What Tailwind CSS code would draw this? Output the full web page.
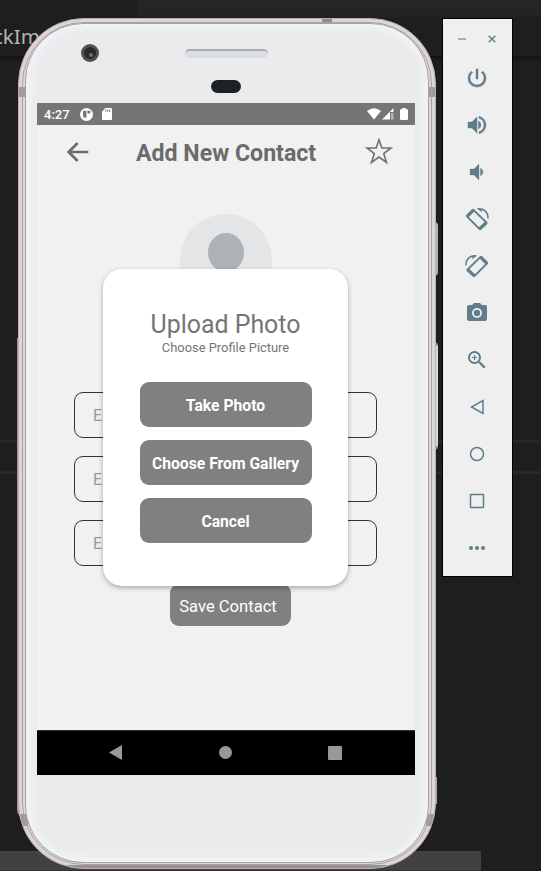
<!DOCTYPE html>
<html lang="en">
<head>
<meta charset="utf-8">
<title>Add New Contact</title>
<script src="https://cdn.jsdelivr.net/npm/@tailwindcss/browser@4"></script>
</head>
<body class="relative h-[871px] w-[541px] overflow-hidden bg-[#1e1e1e] font-[Roboto,sans-serif]">
<!-- Editor window behind the emulator -->
<div class="absolute inset-0 flex flex-col">
  <div class="flex h-[17px] bg-[#1f1f1f]"><div class="ml-[137px] grow bg-[#252525]"></div></div>
  <div class="flex h-[39px] items-center bg-[#1e1e1e] shadow-[0_2px_4px_#111]"><span class="-ml-[7px] font-['Noto_Sans',sans-serif] text-[20.5px] text-[#b4b4b4]">ckIm</span></div>
  <div class="mt-[384px] h-[34px] border-y-3 border-[#282828]"></div>
  <div class="mt-auto h-5 w-[481px] border-b border-[#382e30] bg-[#414141]"></div>
</div>

<!-- Side buttons -->
<div class="absolute left-[434px] top-[222px] h-[54px] w-1 rounded-r-sm bg-[#b3b6b7]"></div>
<div class="absolute left-[434px] top-[342px] h-[108px] w-1 rounded-r-sm border-y-4 border-[#969494] bg-[#d8dad9]"></div>
<div class="absolute left-[434px] top-[777px] h-[27px] w-[3px] bg-[#aaa5a7]"></div>
<div class="absolute left-[17px] top-[338px] h-[480px] w-2 rounded-bl-[8px] bg-[#9f999b]"></div>

<!-- Phone -->
<div class="absolute left-[18px] top-[18px] h-[851px] w-[418px] overflow-hidden rounded-[66px] border border-[#b7afb2] bg-[#ded5d9]">
  <div class="absolute -left-px top-[68px] h-2.5 w-2 bg-[#a19a9d]"></div>
  <div class="absolute -right-px top-[68px] h-2.5 w-2 bg-[#a19a9d]"></div>
  <div class="absolute -left-px top-[795px] h-3 w-2.5 bg-[#a19a9d]"></div>
  <div class="absolute -right-px top-[795px] h-3 w-2.5 bg-[#a19a9d]"></div>
  <div class="absolute left-[303px] top-0 h-1.5 w-2.5 bg-[#8f898c]"></div>
  <div class="absolute inset-x-0 bottom-0 h-[3px] bg-[#989194]"></div>
  <div class="absolute inset-[3px] rounded-[62px] border border-[#aaa2a5]"></div>
  <div class="absolute inset-x-[6px] bottom-[5px] top-[4px] flex flex-col rounded-[58px] border border-[#a5a1a4] bg-[#e9ebed] pl-[11px] pr-[13px] shadow-[inset_0_0_8px_4px_#f3f4f7]">
    <div class="relative h-[79px] shrink-0">
      <div class="absolute left-[44px] top-[20px] size-[18px] rounded-full bg-[#4e5052] p-[3px]"><div class="flex size-3 items-center justify-center rounded-full bg-[#282a2e]"><div class="ml-0.5 mt-1 size-1 rounded-full bg-[#77704c]"></div></div></div>
      <div class="absolute left-[148px] top-[25px] h-[9px] w-[83px] rounded-full border-t-2 border-[#a7abb8] bg-[#dcdde0]"></div>
      <div class="absolute left-[174px] top-[56px] h-[13px] w-[30px] rounded-full bg-[#1e2227]"></div>
    </div>
    <!-- Screen -->
    <div class="relative flex h-[672px] w-[378px] shrink-0 flex-col bg-[#f1f1f1]">
      <header class="flex h-[22px] items-center bg-[#757575] pl-[7px] pr-[7px] text-white">
        <span class="pt-px text-[13px] font-medium leading-[21px]">4:27</span>
        <svg class="ml-[10px] size-[13px]" viewBox="0 0 13 13"><circle cx="6.5" cy="6.5" r="6.5" fill="#fff"/><path d="M3 2.7h3.5v7H5a2 2 0 0 1-2-2zM7.5 2.8h2.8v2.7H7.5z" fill="#757575"/></svg>
        <svg class="ml-[9px] h-3 w-[10px]" viewBox="0 0 10 12"><path d="M3.5 0H9q1 0 1 1v10q0 1-1 1H1q-1 0-1-1V3.5z" fill="#fff"/><path d="M3.8 1.5v2.4M5.8 1.5v2.4M7.8 1.5v2.4" stroke="#757575"/></svg>
        <svg class="ml-auto h-3 w-[14px]" viewBox="0 0 14 12"><path d="M0 3Q7-2.5 14 3L7 11.5z" fill="#fff"/></svg>
        <svg class="ml-[1px] h-3 w-3" viewBox="0 0 12 12"><path d="M0 11.5L11.5 0v4H8v7.5z" fill="#fff"/><path d="M9 5h2.5v6.5H9z" fill="#b8b8b8"/></svg>
        <svg class="ml-[6px] h-3 w-2" viewBox="0 0 8 12"><path d="M2.2 0h3.6v1.2H7q1 0 1 1V11q0 1-1 1H1q-1 0-1-1V2.2q0-1 1-1h1.2z" fill="#fff"/></svg>
      </header>
      <main class="flex grow flex-col items-center">
        <div class="flex h-[54px] w-full items-center pl-[30px] pr-[22px]">
          <svg class="-mt-px h-[20px] w-[22px]" viewBox="0 0 22 20" fill="none" stroke="#6c6c6c" stroke-width="2.6"><path d="M21.3 10H1.8M10.700 1L1.700 10l9 9"/></svg>
          <h1 class="ml-[47px] mt-[3px] whitespace-nowrap text-[23.15px] font-bold leading-7 text-[#6b6b6b]">Add New Contact</h1>
          <svg class="-mt-0.5 ml-auto size-7" viewBox="0 0 28 28" fill="none" stroke="#707070" stroke-width="1.6"><path d="M14 2.800l2.800 8.200h9.200l-7.300 5.500 2.800 9-7.500-5.500-7.500 5.500 2.800-9L2 11h9.200z"/></svg>
        </div>
        <div class="mt-[35px] h-[92px] w-[92px] rounded-full bg-[#e3e5e6] pt-[19px]"><div class="mx-auto h-[39px] w-9 rounded-[50%] bg-[#adb3b7]"></div></div>
        <div class="mr-px mt-[86px] flex w-[303px] flex-col gap-[18px] text-[16px] text-[#999]">
          <div class="flex h-[46px] items-center rounded-[9px] border border-[#333] pl-[18px] pt-0.5">Enter Name</div>
          <div class="flex h-[46px] items-center rounded-[9px] border border-[#333] pl-[18px] pt-0.5">Enter Phone</div>
          <div class="flex h-[46px] items-center rounded-[9px] border border-[#333] pl-[18px] pt-0.5">Enter Email</div>
        </div>
        <button class="ml-[9px] mt-[18px] h-[42px] w-[121px] rounded-[9px] bg-[#808080] pr-[5px] pt-1 text-[16.6px] text-white">Save Contact</button>
      </main>
      <nav class="flex h-[45px] items-center border-t border-[#303637] bg-black pb-px pl-[72px]">
        <svg class="h-[15px] w-[13px]" viewBox="0 0 13 15"><path d="M13 0v15L0 7.500z" fill="#999"/></svg>
        <div class="ml-[97px] size-[13px] rounded-full bg-[#999]"></div>
        <div class="ml-[96px] size-[14px] rounded-[1px] bg-[#999]"></div>
      </nav>
      <section class="absolute left-[66px] top-[166px] flex h-[317px] w-[245px] flex-col items-center rounded-[19px] bg-white pt-[41px] text-[#757575] shadow-[0_2px_5px_rgba(0,0,0,0.3)]">
        <h2 class="text-[24.9px] leading-[30px]">Upload Photo</h2>
        <p class="-mt-px text-[12.9px] leading-[17px]">Choose Profile Picture</p>
        <div class="mt-[26px] flex w-[172px] flex-col gap-[13px] text-[15.7px] font-bold text-white">
          <button class="h-[45px] rounded-[9px] bg-[#808080] pt-0.5">Take Photo</button>
          <button class="h-[45px] whitespace-nowrap rounded-[9px] bg-[#808080] pt-0.5">Choose From Gallery</button>
          <button class="h-[45px] rounded-[9px] bg-[#808080] pt-0.5">Cancel</button>
        </div>
      </section>
    </div>
  </div>
</div>

<!-- Emulator toolbar -->
<aside class="absolute left-[442px] top-[18px] flex h-[559px] w-[71px] flex-col items-center border border-black bg-[#efefef] text-[#607d8b]">
  <div class="flex h-[35px] w-full items-center pl-[15px] pt-[5px]">
    <div class="h-[2px] w-2 bg-[#9eb0b8]"></div>
    <svg class="ml-[22px] size-2" viewBox="0 0 8 8" stroke="currentColor" stroke-width="1.4"><path d="M.7.7l6.600 6.600M7.300.7L.7 7.300"/></svg>
  </div>
  <div class="flex flex-col gap-[23px] pr-[2px] pt-[12px]">
    <svg class="size-6" viewBox="0 0 24 24" fill="currentColor"><path d="M13 3h-2v10h2V3zm4.800 2.200l-1.400 1.400A7 7 0 1 1 7.600 6.600L6.200 5.200a9 9 0 1 0 11.600 0z" stroke="currentColor" stroke-width=".5"/></svg>
    <svg class="size-6" viewBox="0 0 24 24" fill="currentColor"><path d="M3 9v6h4l5 5V4L7 9zM13.500 7.970v8.050a4.500 4.500 0 0 0 0-8.050zM14 3.230v2.060a7 7 0 0 1 0 13.420v2.060a9 9 0 0 0 0-17.540z" stroke="currentColor" stroke-width=".5"/></svg>
    <svg class="size-6" viewBox="0 0 24 24" fill="currentColor"><path d="M5 9v6h4l5 5V4L9 9zM15.500 7.970v8.050a4.500 4.500 0 0 0 0-8.050z" stroke="currentColor" stroke-width=".3"/></svg>
    <svg class="size-6" viewBox="0 0 24 24" fill="none" stroke="currentColor"><path d="M8.500 3L21.500 15.500 14.500 22 2 9.500z" stroke-width="1.800"/><path d="M2 9.500L8.500 3M21.500 15.500L14.500 22" stroke-width="3.200"/><path d="M12.500 1.800C18.500.8 23.300 5 23 11.500M13 1.500l4 3" stroke-width="1.500"/></svg>
    <svg class="size-6" viewBox="0 0 24 24" fill="none" stroke="currentColor"><path d="M15.500 3L2.500 15.500 9.500 22 22 9.500z" stroke-width="1.800"/><path d="M22 9.500L15.500 3M2.500 15.500L9.500 22" stroke-width="3.200"/><path d="M11.500 1.800C5.500.8.700 5 1 11.500M11 1.500L7 4.500" stroke-width="1.500"/></svg>
    <svg class="size-6" viewBox="0 0 24 24" fill="currentColor"><circle cx="12" cy="12" r="3.200"/><path d="M9 2L7.170 4H4a2 2 0 0 0-2 2v12a2 2 0 0 0 2 2h16a2 2 0 0 0 2-2V6a2 2 0 0 0-2-2h-3.170L15 2zm3 15a5 5 0 1 1 0-10 5 5 0 0 1 0 10z"/></svg>
    <svg class="size-6" viewBox="0 0 24 24" fill="none" stroke="currentColor"><circle cx="9.500" cy="9.500" r="5.500" stroke-width="2"/><path d="M14 14l5.700 5.700" stroke-width="2.400"/><path d="M9.500 7v5M7 9.500h5" stroke-width="1.200"/></svg>
    <svg class="size-6" viewBox="0 0 24 24" fill="none" stroke="currentColor" stroke-width="1.500"><path d="M18 5.500v13L6.500 12z"/></svg>
    <svg class="size-6" viewBox="0 0 24 24" fill="none" stroke="currentColor" stroke-width="1.500"><circle cx="12" cy="12" r="6.500"/></svg>
    <svg class="size-6" viewBox="0 0 24 24" fill="none" stroke="currentColor" stroke-width="1.500"><rect x="5.500" y="5.500" width="13" height="13" rx=".5"/></svg>
    <svg class="size-6" viewBox="0 0 24 24" fill="currentColor"><circle cx="6" cy="12" r="2"/><circle cx="12" cy="12" r="2"/><circle cx="18" cy="12" r="2"/></svg>
  </div>
</aside>
</body>
</html>
